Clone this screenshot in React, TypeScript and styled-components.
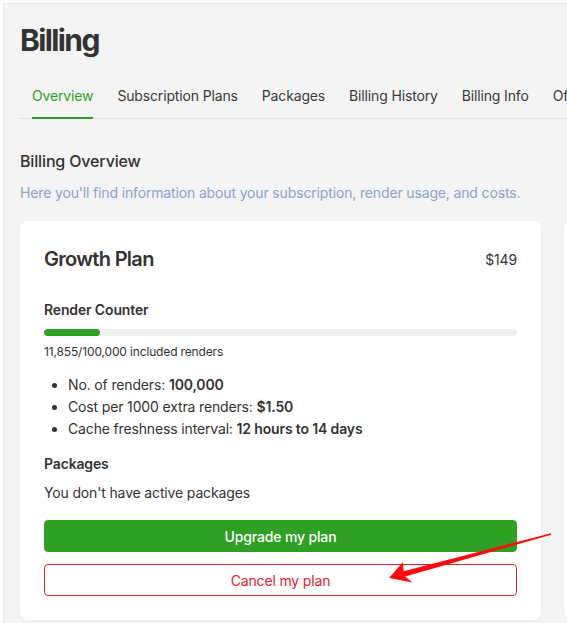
import styled, { createGlobalStyle } from 'styled-components'

const GlobalStyle = createGlobalStyle`
  html, body {
    margin: 0;
    padding: 0;
    background: #ffffff;
  }
  body {
    font-family: Inter, "Noto Sans", sans-serif;
    color: #333333;
    letter-spacing: -0.15px;
  }
  * { box-sizing: border-box; }
`

const tabs = ['Overview', 'Subscription Plans', 'Packages', 'Billing History', 'Billing Info', 'Offers']

const features = [
  { label: 'No. of renders:', value: '100,000' },
  { label: 'Cost per 1000 extra renders:', value: '$1.50' },
  { label: 'Cache freshness interval:', value: '12 hours to 14 days' },
]

const used = 11855
const included = 100000

const App = () => {
  return (
    <Page>
      <GlobalStyle />
      <Main>
        <Title>Billing</Title>
        <Tabs>
          {tabs.map((t, i) => (
            <Tab key={t} $active={i === 0}>{t}</Tab>
          ))}
        </Tabs>
        <SectionTitle>Billing Overview</SectionTitle>
        <Subtitle>Here you'll find information about your subscription, render usage, and costs.</Subtitle>
        <Cards>
          <Card>
            <PlanHeader>
              <PlanName>Growth Plan</PlanName>
              <Price>$149</Price>
            </PlanHeader>
            <Label>Render Counter</Label>
            <Track>
              <Fill style={{ width: `${(used / included) * 100}%` }} />
            </Track>
            <Usage>11,855/100,000 included renders</Usage>
            <Features>
              {features.map(f => (
                <li key={f.label}>
                  {f.label} <b>{f.value}</b>
                </li>
              ))}
            </Features>
            <Label $packages>Packages</Label>
            <Note>You don't have active packages</Note>
            <Button $variant="primary">Upgrade my plan</Button>
            <Button $variant="danger">Cancel my plan</Button>
          </Card>
          <Card />
        </Cards>
      </Main>
      <Arrow viewBox="0 0 567 623" width="567" height="623">
        <polygon
          points="551,533.3 403.6,571.2 403,562 389,578 412.5,582.5 405.2,576.4 551.3,534.7"
          fill="#ff0a0a"
        />
      </Arrow>
    </Page>
  )
}

const Page = styled.div`
  position: relative;
  width: 567px;
  height: 623px;
  overflow: hidden;
  padding: 3px 0 0 3px;
`
const Main = styled.div`
  height: 100%;
  background: #f4f4f4;
  border-top: 1px solid #e8e8e8;
  border-left: 1px solid #e8e8e8;
  padding: 16px 0 0 16px;
  overflow: hidden;
`
const Title = styled.h1`
  margin: 0;
  font-size: 30px;
  line-height: 40px;
  font-weight: 700;
  letter-spacing: -1.6px;
  color: #333333;
`
const Tabs = styled.div`
  display: flex;
  gap: 24px;
  margin-top: 24px;
  padding-left: 12px;
  border-bottom: 1px solid #e3e3e3;
  white-space: nowrap;
  width: 700px;
`
const Tab = styled.div<{ $active?: boolean }>`
  font-size: 14px;
  line-height: 20px;
  padding: 2px 0 11px;
  color: ${p => (p.$active ? '#2ea024' : '#3a3a3a')};
  border-bottom: 2px solid ${p => (p.$active ? '#2ea024' : 'transparent')};
  margin-bottom: -1px;
`
const SectionTitle = styled.h2`
  margin: 30px 0 0;
  font-size: 16px;
  line-height: 24px;
  font-weight: 500;
  color: #333333;
`
const Subtitle = styled.p`
  margin: 10px 0 0;
  font-size: 14px;
  line-height: 20px;
  color: #8ba3cb;
  white-space: nowrap;
`
const Cards = styled.div`
  display: flex;
  gap: 23px;
  margin-top: 18px;
  align-items: flex-start;
`
const Card = styled.div`
  flex: 0 0 521px;
  min-height: 398px;
  background: #ffffff;
  border-radius: 8px;
  padding: 24px;
  display: flex;
  flex-direction: column;
  box-shadow: 0 1px 2px rgba(0, 0, 0, 0.03);
`
const PlanHeader = styled.div`
  display: flex;
  justify-content: space-between;
  align-items: center;
  height: 28px;
`
const PlanName = styled.div`
  font-size: 20px;
  font-weight: 600;
  letter-spacing: -0.7px;
  color: #333333;
`
const Price = styled.div`
  font-size: 14px;
  color: #333333;
`
const Label = styled.div<{ $packages?: boolean }>`
  margin-top: ${p => (p.$packages ? '14px' : '27px')};
  font-size: 14px;
  line-height: 20px;
  font-weight: 600;
  color: #333333;
`
const Track = styled.div`
  margin-top: 9px;
  height: 7px;
  border-radius: 4px;
  background: #f0f0f0;
  overflow: hidden;
`
const Fill = styled.div`
  height: 100%;
  border-radius: 4px;
  background: #2ea024;
`
const Usage = styled.div`
  margin-top: 8px;
  font-size: 12px;
  line-height: 16px;
  color: #333333;
`
const Features = styled.ul`
  margin: 14px 0 0;
  padding-left: 24px;
  font-size: 14px;
  line-height: 22px;
  color: #333333;
  b { font-weight: 600; }
`
const Note = styled.div`
  margin-top: 9px;
  font-size: 14px;
  line-height: 20px;
  color: #333333;
`
const Button = styled.button<{ $variant: 'primary' | 'danger' }>`
  height: 32px;
  width: 100%;
  border-radius: 4px;
  font-family: inherit;
  letter-spacing: inherit;
  font-size: 14px;
  font-weight: 500;
  cursor: pointer;
  margin-top: ${p => (p.$variant === 'primary' ? '17px' : '12px')};
  background: ${p => (p.$variant === 'primary' ? '#2ea024' : '#ffffff')};
  color: ${p => (p.$variant === 'primary' ? '#ffffff' : '#e0202f')};
  border: 1px solid ${p => (p.$variant === 'primary' ? '#2ea024' : '#e0202f')};
  ${p => p.$variant === 'danger' && 'font-weight: 400;'}
`
const Arrow = styled.svg`
  position: absolute;
  top: 0;
  left: 0;
  pointer-events: none;
`

export default App
